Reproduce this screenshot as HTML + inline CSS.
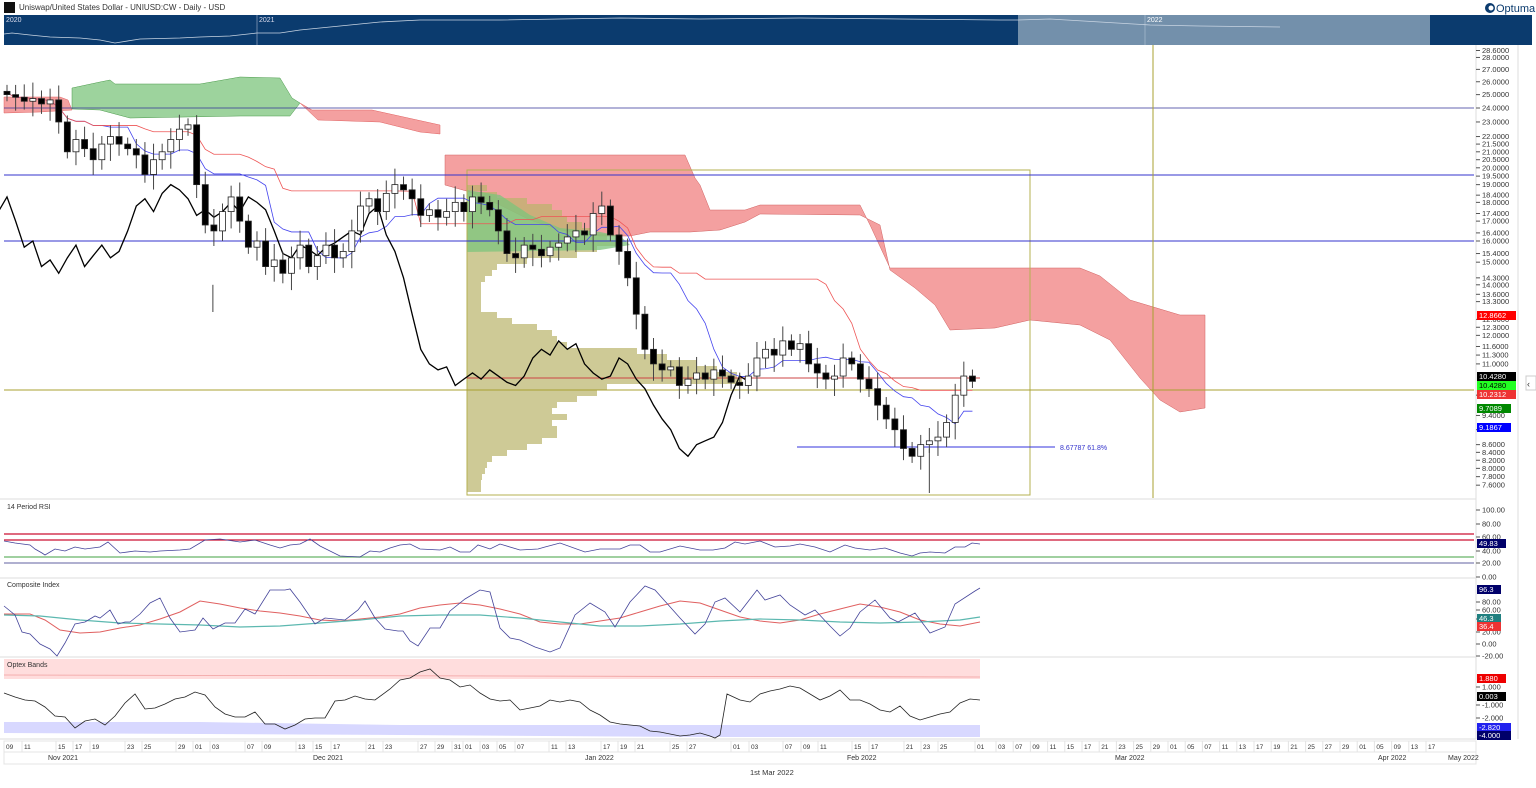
<!DOCTYPE html><html><head><meta charset="utf-8"><style>
body{margin:0;width:1536px;height:783px;overflow:hidden;background:#fff;font-family:"Liberation Sans",sans-serif}
svg text{font-family:"Liberation Sans",sans-serif}
</style></head><body>
<svg id="s" width="1536" height="783" xmlns="http://www.w3.org/2000/svg">
<rect x="4" y="2" width="11" height="11" fill="#111"/>
<text x="19" y="10" font-size="8" fill="#333">Uniswap/United States Dollar - UNIUSD:CW - Daily - USD</text>
<circle cx="1490" cy="8" r="5" fill="#0b3b6e"/><circle cx="1491" cy="8" r="2.5" fill="#fff"/>
<text x="1496" y="12" font-size="11" fill="#0b3b6e">Optuma</text>
<rect x="4" y="15" width="1528" height="30" fill="#0b3b6e"/>
<rect x="1018" y="15" width="412" height="30" fill="#7390ab"/>
<line x1="257" y1="15" x2="257" y2="45" stroke="#6b86a8"/>
<line x1="1145" y1="15" x2="1145" y2="45" stroke="#9ab0c4"/>
<text x="6" y="22" font-size="7" fill="#dde">2020</text><text x="259" y="22" font-size="7" fill="#dde">2021</text><text x="1147" y="22" font-size="7" fill="#fff">2022</text>
<polyline fill="none" stroke="#c8d4e2" stroke-width="0.8" points="4,34 12,33 30,35 50,37 80,38 100,40 115,43 140,39 180,38 200,37 230,36 257,33 280,33 300,30 320,28 340,26 380,22 420,20 500,20 560,19 620,18 700,19 800,18 900,19 1000,20 1018,20 1050,19 1100,22 1150,25 1200,26 1280,27"/>
<g stroke="#ddd"><line x1="0" y1="499" x2="1476" y2="499"/><line x1="0" y1="578" x2="1476" y2="578"/><line x1="0" y1="657" x2="1476" y2="657"/><line x1="0" y1="739" x2="1476" y2="739"/><line x1="1476" y1="45" x2="1476" y2="739"/><line x1="1518" y1="45" x2="1518" y2="739"/></g>
<polygon fill="#f08080" fill-opacity="0.75" stroke="#e06060" stroke-width="0.5" points="4,97 60,97 68,100 72,110 40,112 4,113"/>
<polygon fill="#7cc47c" fill-opacity="0.75" stroke="#4a9a4a" stroke-width="0.5" points="72,88 100,82 110,80 115,84 200,84 240,77 280,78 292,98 300,103 290,116 240,116 130,118 100,110 72,109"/>
<polygon fill="#f08080" fill-opacity="0.75" stroke="#e06060" stroke-width="0.5" points="300,103 312,110 372,110 440,125 440,134 420,132 380,122 318,120"/>
<polygon fill="#f08080" fill-opacity="0.75" stroke="#d06060" stroke-width="0.5" points="445,155 685,155 695,178 700,185 710,210 745,210 760,205 860,205 870,225 890,268 1080,268 1100,276 1130,300 1180,315 1205,315 1205,408 1180,412 1160,400 1140,378 1110,340 1080,325 1030,320 995,328 950,330 935,305 915,288 890,270 880,225 860,215 760,214 745,222 720,230 690,232 650,232 630,236 600,236 560,230 530,220 500,205 470,192 445,185"/>
<g id="vp" fill="#b9b36a" fill-opacity="0.7"></g>
<polygon fill="#7cc47c" fill-opacity="0.75" points="467,190 500,195 530,215 560,228 600,232 620,236 630,245 600,250 467,252"/>
<rect x="467" y="170" width="563" height="325" fill="none" stroke="#b5b050" stroke-width="1"/>
<line x1="4" y1="108" x2="1474" y2="108" stroke="#333399" stroke-width="0.8"/>
<line x1="4" y1="175" x2="1474" y2="175" stroke="#3333cc" stroke-width="1"/>
<line x1="4" y1="241" x2="1474" y2="241" stroke="#3333cc" stroke-width="1"/>
<line x1="4" y1="390" x2="1474" y2="390" stroke="#a8a030" stroke-width="1"/>
<line x1="467" y1="378" x2="980" y2="378" stroke="#cc4444" stroke-width="1"/>
<line x1="1153" y1="45" x2="1153" y2="498" stroke="#a8a030" stroke-width="1"/>
<line x1="797" y1="447" x2="1055" y2="447" stroke="#3333dd" stroke-width="1"/>
<text x="1060" y="450" font-size="7" fill="#3333cc">8.67787    61.8%</text>
<g id="ind"></g>
<g id="cd"></g>
<text x="7" y="509" font-size="7" fill="#333">14 Period RSI</text>
<line x1="4" y1="534" x2="1474" y2="534" stroke="#cc1133" stroke-width="1.3"/>
<line x1="4" y1="540" x2="1474" y2="540" stroke="#cc1133" stroke-width="1.3"/>
<line x1="4" y1="557" x2="1474" y2="557" stroke="#80c080" stroke-width="1.5"/>
<line x1="4" y1="563" x2="1474" y2="563" stroke="#6060a0" stroke-width="1"/>
<polyline fill="none" stroke="#44449a" stroke-width="0.8" points="4,541 15,543 30,545 35,549 42,553 45,555 55,549 65,551 75,547 85,549 100,547 108,542 120,553 135,551 150,552 160,551 180,550 190,549 205,540 220,539 240,542 255,540 270,545 280,548 290,545 300,544 310,539 320,546 340,556 360,557 370,551 380,552 390,548 400,545 410,544 420,549 440,550 450,547 460,552 470,552 478,545 490,549 500,544 520,550 538,549 545,547 560,543 585,552 600,549 620,549 630,545 640,545 650,552 660,552 680,546 700,550 713,550 725,548 735,542 745,544 760,541 775,547 790,546 800,544 815,547 830,552 845,545 855,548 870,550 885,548 900,553 912,556 920,553 930,552 945,553 955,547 965,547 972,543 980,544"/>
<text x="7" y="587" font-size="7" fill="#333">Composite Index</text>
<polyline fill="none" stroke="#e06060" stroke-width="1" points="4,614 30,614 45,620 60,630 80,633 100,632 120,628 140,625 160,619 180,612 200,601 220,604 240,608 260,611 280,613 300,616 320,620 340,621 360,619 380,617 400,614 420,608 440,605 460,603 480,605 500,609 520,614 540,622 560,624 580,624 600,621 620,618 640,612 660,606 680,601 700,603 720,610 740,617 760,621 780,623 800,620 820,614 840,609 860,604 880,607 900,612 920,620 940,624 960,626 980,622"/>
<polyline fill="none" stroke="#5cb8b0" stroke-width="1.2" points="4,615 40,616 80,620 120,623 160,624 200,625 240,627 280,626 320,623 360,620 400,616 440,615 480,615 520,618 560,622 600,626 640,626 680,624 720,621 760,619 800,620 840,622 880,623 920,622 960,620 980,617"/>
<polyline fill="none" stroke="#44449a" stroke-width="0.8" points="4,606 15,615 22,632 30,634 40,644 50,649 57,656 65,643 75,624 85,622 95,616 100,618 110,610 118,624 125,622 130,622 140,614 150,603 160,598 170,618 180,632 195,630 203,618 213,629 225,623 235,623 245,609 255,614 270,590 285,590 290,589 300,602 315,624 325,618 345,620 358,610 365,601 375,618 385,629 398,631 403,631 410,641 418,646 430,628 440,628 450,611 465,599 480,590 490,592 500,628 510,638 520,640 535,647 550,652 560,648 575,615 590,603 605,612 615,627 630,602 645,586 655,590 680,618 695,634 705,624 715,602 725,598 740,612 757,590 765,600 780,595 790,605 805,615 815,610 830,626 840,636 850,628 860,612 875,600 890,618 898,622 915,613 930,633 945,627 955,604 975,591 980,588"/>
<rect x="4" y="659" width="976" height="20" fill="#fdd" />
<line x1="4" y1="675" x2="980" y2="677" stroke="#f0a0a0" stroke-width="0.8"/>
<polygon fill="#d8d8ff" points="4,722 200,722 400,725 700,725 980,725 980,737 700,737 400,735 4,733"/>
<text x="7" y="667" font-size="7" fill="#333">Optex Bands</text>
<polyline fill="none" stroke="#222" stroke-width="0.8" points="4,693 15,697 25,700 35,701 45,707 55,716 65,717 75,728 85,721 95,719 105,725 115,716 125,703 135,694 145,709 155,708 165,704 175,699 185,697 195,692 205,695 215,707 225,714 235,717 245,717 255,712 265,724 275,724 285,729 295,725 305,719 315,718 325,718 335,701 345,700 355,696 365,699 375,700 390,689 400,680 410,678 420,672 430,669 440,678 450,680 460,687 470,685 480,693 490,699 500,701 510,700 520,710 530,708 540,706 550,700 560,702 570,700 580,702 590,710 600,715 610,722 620,724 630,725 640,726 650,731 660,732 670,734 680,736 690,735 700,733 710,736 715,738 720,735 727,694 740,700 750,702 760,694 770,691 780,689 790,686 800,688 810,694 820,700 830,696 840,690 850,700 860,700 870,704 880,710 890,712 900,706 910,716 920,720 930,717 940,714 950,712 960,703 970,699 980,700"/>
<g id="ax" font-size="7.5" fill="#333"></g>
<rect x="1526" y="376" width="10" height="14" fill="#fff" stroke="#ccc"/><text x="1527" y="387" font-size="9" fill="#333">‹</text>
<rect x="4" y="741" width="1472" height="11" fill="#fff" stroke="#e4e4e4"/>
<rect x="4" y="752" width="1472" height="12" fill="#fff" stroke="#e4e4e4"/>
<g id="dx" font-size="6.5" fill="#333"></g>
<text x="48" y="760" font-size="7" fill="#333">Nov 2021</text>
<text x="313" y="760" font-size="7" fill="#333">Dec 2021</text>
<text x="585" y="760" font-size="7" fill="#333">Jan 2022</text>
<text x="847" y="760" font-size="7" fill="#333">Feb 2022</text>
<text x="1115" y="760" font-size="7" fill="#333">Mar 2022</text>
<text x="1378" y="760" font-size="7" fill="#333">Apr 2022</text>
<text x="1448" y="760" font-size="7" fill="#333">May 2022</text>
<text x="750" y="775" font-size="7.5" fill="#333">1st Mar 2022</text>
</svg>
<script>
const NS="http://www.w3.org/2000/svg";
function el(p,t,a,txt){const e=document.createElementNS(NS,t);for(const k in a)e.setAttribute(k,a[k]);if(txt!=null)e.textContent=txt;document.getElementById(p).appendChild(e);return e;}
const Y=p=>241+(Math.log(16)-Math.log(p))*328;
const c=[25,24.8,24.5,24.7,24.3,24.6,23,21,21.8,21.2,20.5,21.5,22,21.5,21.2,20.8,19.6,20.5,21,21.8,22.5,22.8,
19,16.8,16.5,17.5,18.3,17,15.7,16,14.8,15.1,14.5,15.2,15.8,14.8,15.3,15.8,15.2,15.5,16.5,17.8,18.2,17.5,18.5,19,18.7,18.2,17.3,17.6,17.2,17.5,18,
17.5,18.3,18,17.6,16.5,15.4,15.2,15.8,15.6,15.3,15.7,15.9,16.2,16.5,16.3,17.4,17.8,16.3,15.5,14.3,12.8,11.5,11.0,10.8,10.9,10.3,10.5,10.7,10.5,10.8,10.6,
10.4,10.3,10.6,11.2,11.5,11.3,11.8,11.5,11.7,11,10.7,10.5,10.6,11.2,11,10.5,10.2,9.7,9.3,9.0,8.5,8.3,8.6,8.7,8.8,9.2,10.0,10.6,10.43];
const X=i=>7+i*8.62;
let H=[],L=[];
for(let i=0;i<c.length;i++){const o=i?c[i-1]:c[0]*1.01;const hi=Math.max(o,c[i])*(1+0.02+((i*37)%7)/200),lo=Math.min(o,c[i])*(1-0.02-((i*53)%7)/200);H.push(hi);L.push(lo);
 const x=X(i);el("cd","line",{x1:x,y1:Y(hi),x2:x,y2:Y(lo),stroke:"#444","stroke-width":1});
 const t=Math.min(Y(o),Y(c[i])),h=Math.max(2,Math.abs(Y(o)-Y(c[i])));
 el("cd","rect",{x:x-3,y:t,width:6,height:h,fill:c[i]>=o?"#fff":"#000",stroke:"#222","stroke-width":0.8});}
el("cd","line",{x1:X(24)-1,y1:Y(14),x2:X(24)-1,y2:312,stroke:"#444"});
el("cd","line",{x1:X(107),y1:Y(8.5),x2:X(107),y2:493,stroke:"#444"});
function ma(n){let p=[];for(let i=0;i<c.length;i++){const s=Math.max(0,i-n+1);const hh=Math.max(...H.slice(s,i+1)),ll=Math.min(...L.slice(s,i+1));p.push(X(i)+","+Y((hh+ll)/2));}return p.join(" ");}
el("ind","polyline",{points:ma(9),fill:"none",stroke:"#4444ee","stroke-width":0.8});
el("ind","polyline",{points:ma(26),fill:"none",stroke:"#ee5555","stroke-width":0.8});
let ch=[];for(let i=0;i<c.length;i++){ch.push(X(i-26)+","+Y(c[i]));}
el("ind","polyline",{points:ch.join(" "),fill:"none",stroke:"#000","stroke-width":1.3});
const vp=[[185,20],[192,30],[198,60],[204,85],[210,95],[216,100],[222,115],[228,125],[234,140],[240,150],[246,130],[252,110],[258,60],[264,30],[270,25],[276,18],[282,14],[288,14],[294,14],[300,14],[306,14],[312,30],[318,45],[324,70],[330,85],[336,90],[342,100],[348,170],[354,200],[360,230],[366,250],[372,270],[378,275],[384,140],[390,130],[396,110],[402,90],[408,85],[414,100],[420,85],[426,90],[432,90],[438,75],[444,60],[450,40],[456,25],[462,20],[468,18],[474,15],[480,14],[486,14]];
vp.forEach(v=>el("vp","rect",{x:467,y:v[0],width:v[1],height:6}));
const ticks=[28.6,28,27,26,25,24,23,22,21.5,21,20.5,20,19.5,19,18.4,18,17.4,17,16.4,16,15.4,15,14.3,14,13.6,13.3,12.6,12.3,12,11.6,11.3,11,10,9.4,9,8.6,8.4,8.2,8,7.8,7.6];
ticks.forEach(t=>{el("ax","line",{x1:1476,y1:Y(t),x2:1480,y2:Y(t),stroke:"#555"});el("ax","text",{x:1482,y:Y(t)+2.5},t.toFixed(4));});
[[100,510],[80,524],[60,537],[40,551],[20,563],[0,577],[80,602],[60,610],[40,619],[20,632],[0,644],[-20,656],[1,687],[-1,705],[-2,718]].forEach(a=>{el("ax","line",{x1:1476,y1:a[1],x2:1480,y2:a[1],stroke:"#555"});el("ax","text",{x:1482,y:a[1]+2.5},a[0]==1?"1.000":a[0]==-1?"-1.000":a[0]==-2?"-2.000":a[0].toFixed(2));});
[["12.8662",315,"#f00","#fff"],["10.4280",376,"#000","#fff"],["10.4280",385,"#2f2","#000"],["10.2312",394,"#e33","#fff"],["9.7089",408,"#080","#fff"],["9.1867",427,"#00f","#fff"],["49.83",543,"#00006a","#fff"],["96.3",589,"#00006a","#fff"],["46.3",618,"#208080","#fff"],["36.4",626,"#e33","#fff"],["1.880",678,"#e00","#fff"],["0.003",696,"#000","#fff"],["-2.820",727,"#22e","#fff"],["-4.000",735,"#00006a","#fff"]].forEach(a=>{el("ax","rect",{x:1477,y:a[1]-4,width:a[0].length*5+4,height:9,fill:a[2]});el("ax","text",{x:1479,y:a[1]+3,fill:a[3]},a[0]);});
const d=[["09",4],["11",22],["15",56],["17",73],["19",90],["23",125],["25",142],["29",176],["01",193],["03",210],["07",245],["09",262],["13",296],["15",313],["17",331],["21",366],["23",383],["27",418],["29",435],["31",452],["01",463],["03",480],["05",497],["07",515],["11",549],["13",566],["17",601],["19",618],["21",635],["25",670],["27",687],["01",731],["03",749],["07",783],["09",801],["11",818],["15",852],["17",869],["21",904],["23",921],["25",938],["01",975]];
let x0=996;const md=["03","07","09","11","15","17","21","23","25","29","01","05","07","11","13","17","19","21","25","27","29","01","05","09","13","17"];
md.forEach((m,i)=>d.push([m,x0+i*17.2]));
d.forEach(a=>{el("dx","text",{x:a[1]+2,y:749},a[0]);el("dx","line",{x1:a[1],y1:741,x2:a[1],y2:752,stroke:"#e4e4e4"});});
</script>
</body></html>
